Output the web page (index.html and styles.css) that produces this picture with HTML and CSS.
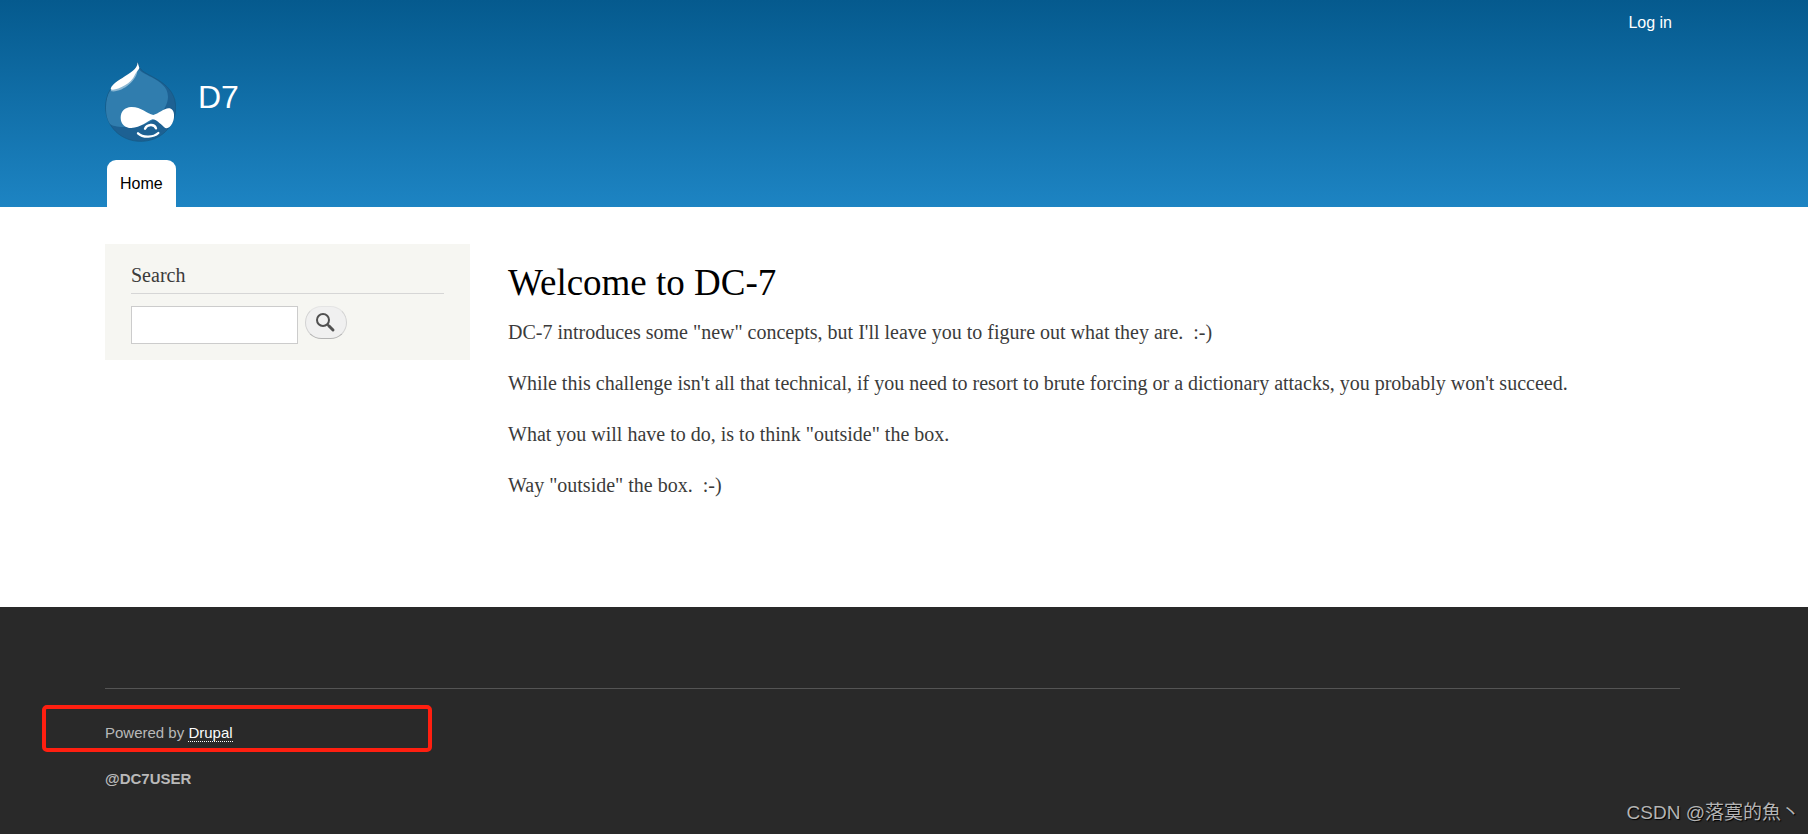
FILE: index.html
```html
<!DOCTYPE html>
<html lang="en">
<head>
    <meta charset="UTF-8">
    <meta name="viewport" content="width=device-width, initial-scale=1.0">
    <title>Welcome to DC-7 | D7</title>
    <link rel="stylesheet" href="styles.css">
</head>
<body>

    <header class="header">
        <nav class="user-menu">
            <a href="#">Log in</a>
        </nav>
        <div class="branding">
            <a class="logo" href="#" aria-label="Home">
                <svg viewBox="0 0 213 240" width="71" height="80">
                    <path fill="#1d6193" stroke="#17567f" stroke-width="2" d="M98 2C103 26 119 31 140 43C178 63 212 88 212 136C212 194 166 238 107 238C46 238 2 192 2 136C2 98 19 68 49 50C73 37 94 26 98 2Z"/>
                    <path fill="#307dae" d="M100 18C106 31 122 36 140 46C164 59 189 75 189 104C189 145 140 194 76 194C43 197 22 192 15 186C5 170 3 155 3 136C3 98 20 69 50 52C76 38 94 31 100 18Z"/>
                    <path fill="#8db9d4" d="M97 25C97 55 53 92 19 88C14 80 30 66 50 54C70 42 85 35 97 25Z"/>
                    <path fill="#fff" d="M98 1C97 22 76 33 52 48C31 60 17 73 17 82C30 89 79 66 89 40C92 31 103 22 103 17C101 12 100 8 98 1Z"/>
                    <path fill="#fff" d="M78 135C108 134 126 155 145 159C160 156 177 139 191 139C211 139 210 170 202 184C193 200 184 202 176 194C164 184 154 173 143 172C127 177 107 198 79 198C60 198 47 185 47 167C47 148 60 136 78 135Z"/>
                    <path fill="none" stroke="#fff" stroke-width="7" stroke-linecap="round" d="M120 200C126 187 148 184 153 199M99 214C115 229 146 226 160 213"/>
                </svg>
            </a>
            <a class="site-name" href="#">D7</a>
        </div>
        <nav class="main-menu">
            <a class="tab" href="#">Home</a>
        </nav>
    </header>

    <main class="main">
        <aside class="sidebar">
            <form class="search-block">
                <h2><label for="keys">Search</label></h2>
                <div class="search-row">
                    <input type="search" id="keys" class="search-input">
                    <button type="button" class="search-button" aria-label="Search">
                        <svg viewBox="0 0 20 20" width="20" height="20" fill="none" stroke="#505050">
                            <circle cx="7" cy="7" r="6" stroke-width="2"/>
                            <path d="M11 11l3 3" stroke-width="2"/>
                            <path d="M13 13l4 4" stroke-width="3" stroke-linecap="round"/>
                        </svg>
                    </button>
                </div>
            </form>
        </aside>
        <article class="content">
            <h1>Welcome to DC-7</h1>
            <p>DC-7 introduces some "new" concepts, but I'll leave you to figure out what they are.&nbsp; :-)</p>
            <p>While this challenge isn't all that technical, if you need to resort to brute forcing or a dictionary attacks, you probably won't succeed.</p>
            <p>What you will have to do, is to think "outside" the box.</p>
            <p>Way "outside" the box.&nbsp; :-)</p>
        </article>
    </main>

    <footer class="footer">
        <div class="footer-inner">
            <div class="powered">Powered by <a href="#">Drupal</a><span class="highlight"></span></div>
            <div class="credit">@DC7USER</div>
        </div>
        <span class="watermark">CSDN @落寞的魚丶</span>
    </footer>

</body>
</html>
```
FILE: styles.css
```css
* {
    margin: 0;
    padding: 0;
    box-sizing: border-box;
}

body {
    min-height: 100vh;
    display: flex;
    flex-direction: column;
    font-family: Georgia, "Liberation Serif", serif;
    font-size: 20px;
    color: #3b3b3b;
    background: #fff;
}

a {
    color: inherit;
    text-decoration: none;
}

.header {
    padding: 0 128px 0 105px;
    color: #fff;
    font-family: "Liberation Sans", Arial, sans-serif;
    background: linear-gradient(#055a8e, #1d84c3);
}

.user-menu {
    display: flex;
    justify-content: flex-end;
    padding: 13px 8px 11px;
    font-size: 16px;
    line-height: 20px;
}

.branding {
    display: flex;
    gap: 22px;
    padding: 18px 0;
}

.logo {
    height: 80px;
}

.site-name {
    padding-top: 15px;
    font-size: 32px;
    line-height: 40px;
}

.main-menu {
    display: flex;
    padding-left: 2px;
}

.tab {
    padding: 0 13px;
    border-radius: 9px 9px 0 0;
    background: #fff;
    color: #000;
    font-size: 16px;
    line-height: 47px;
}

.main {
    display: flex;
    gap: 38px;
    align-items: flex-start;
    padding: 37px 80px 86px 105px;
}

.sidebar {
    flex: 0 0 365px;
}

.search-block {
    padding: 18px 26px 16px;
    background: #f6f6f2;
}

.search-block h2 {
    padding-bottom: 5px;
    margin-bottom: 12px;
    border-bottom: 1px solid #d6d6d6;
    font-size: 20px;
    font-weight: normal;
    line-height: 26px;
}

.search-row {
    display: flex;
    align-items: flex-start;
    gap: 7px;
}

.search-input {
    width: 167px;
    height: 38px;
    padding: 4px;
    border: 1px solid #ccc;
    background: #fff;
    font-size: 16px;
    appearance: none;
}

.search-button {
    display: flex;
    align-items: center;
    justify-content: center;
    width: 42px;
    height: 33px;
    border: 1px solid #d2d2d2;
    border-top-color: #e4e4e4;
    border-bottom-color: #b4b4b4;
    border-radius: 17px;
    background: #f0f0f0;
}

.content {
    flex: 1;
    padding-top: 16px;
}

.content h1 {
    margin-bottom: 11px;
    color: #000;
    font-size: 37px;
    font-weight: normal;
    line-height: 46px;
}

.content p {
    margin-bottom: 20px;
    line-height: 31px;
}

.footer {
    position: relative;
    flex: 1;
    padding: 81px 128px 20px 105px;
    background: #292929;
    color: #b9b9b9;
    font-family: "Liberation Sans", Arial, sans-serif;
    font-size: 15px;
}

.footer-inner {
    padding-top: 34px;
    border-top: 1px solid #545454;
    line-height: 20px;
}

.powered {
    position: relative;
    margin-bottom: 26px;
}

.powered a {
    border-bottom: 1px dotted #fcfcfc;
    color: #fcfcfc;
}

/* red frame around the powered-by line */
.highlight {
    position: absolute;
    top: -18px;
    left: -63px;
    width: 390px;
    height: 47px;
    border: 4px solid #ff1f10;
    border-radius: 5px;
}

.credit {
    font-weight: bold;
}

.watermark {
    position: absolute;
    right: 8px;
    bottom: 6px;
    color: #b4b4b4;
    font-family: "Liberation Sans", "Noto Sans CJK SC", sans-serif;
    font-size: 19px;
    line-height: 30px;
    text-shadow: 1px 1px 1px #000;
}
```
